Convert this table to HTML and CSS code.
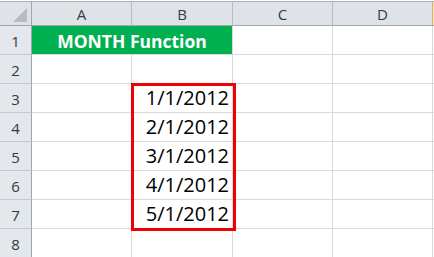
FILE: index.html
```html
<!DOCTYPE html>
<html>
<head>
<meta charset="utf-8">
<link rel="stylesheet" href="styles.css">
</head>
<body>
<div class="sheet">
  <div class="topline"></div>
  <div class="grid">
    <div class="hd corner"><span class="tri"></span></div>
    <div class="hd col">A</div>
    <div class="hd col">B</div>
    <div class="hd col">C</div>
    <div class="hd col sel">D</div>
    <div class="hd tail"></div>

    <div class="rh">1</div>
    <div class="c title">MONTH Function</div>
    <div class="c"></div>
    <div class="c"></div>
    <div class="c tail"></div>

    <div class="rh">2</div>
    <div class="c"></div><div class="c"></div><div class="c"></div><div class="c"></div><div class="c tail"></div>

    <div class="rh">3</div>
    <div class="c"></div><div class="c num">1/1/2012</div><div class="c"></div><div class="c"></div><div class="c tail"></div>

    <div class="rh">4</div>
    <div class="c"></div><div class="c num">2/1/2012</div><div class="c"></div><div class="c"></div><div class="c tail"></div>

    <div class="rh">5</div>
    <div class="c"></div><div class="c num">3/1/2012</div><div class="c"></div><div class="c"></div><div class="c tail"></div>

    <div class="rh">6</div>
    <div class="c"></div><div class="c num">4/1/2012</div><div class="c"></div><div class="c"></div><div class="c tail"></div>

    <div class="rh">7</div>
    <div class="c"></div><div class="c num">5/1/2012</div><div class="c"></div><div class="c"></div><div class="c tail"></div>

    <div class="rh">8</div>
    <div class="c"></div><div class="c"></div><div class="c"></div><div class="c"></div><div class="c tail"></div>
  </div>
  <div class="highlight"></div>
</div>
</body>
</html>
```

FILE: styles.css
```css
* { box-sizing: border-box; margin: 0; padding: 0; }
html, body { background: #ffffff; }
body { width: 434px; height: 257px; overflow: hidden; }

.sheet {
  position: relative;
  font-family: "Open Sans", "Liberation Sans", sans-serif;
}

.topline {
  height: 2px;
  border-top: 1px solid #ffffff;
  border-bottom: 1px solid #a9b0b8;
}

.grid {
  display: grid;
  grid-template-columns: 32px 100px 101px 100px 100px 1px;
  grid-template-rows: 24px repeat(8, 29px);
}

.hd {
  background: #dfe3e8;
  border-right: 1px solid #b5bcc5;
  border-bottom: 1px solid #9ea7b1;
  color: #2f3a45;
  font-size: 15px;
  display: flex;
  align-items: center;
  justify-content: center;
}
.hd.corner {
  position: relative;
  border-right-color: #9ea7b1;
}
.tri {
  position: absolute;
  left: 13px;
  top: 6px;
  width: 0;
  height: 0;
  border-left: 14px solid transparent;
  border-bottom: 14px solid #b7bcc2;
}
.hd.sel { border-right: 1px solid #f0b240; }
.hd.tail { background: #dfe3e8; border-right: none; }

.rh {
  background: #e4e8ec;
  border-right: 1px solid #9ea7b1;
  border-bottom: 1px solid #c3c9d0;
  color: #2f3a45;
  font-size: 15px;
  display: flex;
  align-items: center;
  justify-content: center;
  padding-top: 1px;
}

.c {
  border-right: 1px solid #d9d9d9;
  border-bottom: 1px solid #d9d9d9;
  background: #ffffff;
}
.c.tail { border-right: none; }

.title {
  grid-column: span 2;
  background: #00b050;
  color: #ffffff;
  font-weight: 700;
  font-size: 17.5px;
  display: flex;
  align-items: center;
  justify-content: center;
  padding-top: 1px;
}

.num {
  color: #000000;
  font-size: 20px;
  display: flex;
  align-items: flex-end;
  justify-content: flex-end;
  padding-right: 3px;
  padding-bottom: 1px;
  line-height: 26px;
}

.highlight {
  position: absolute;
  left: 131px;
  top: 83px;
  width: 105px;
  height: 148px;
  border: 3px solid #f00000;
}
```
